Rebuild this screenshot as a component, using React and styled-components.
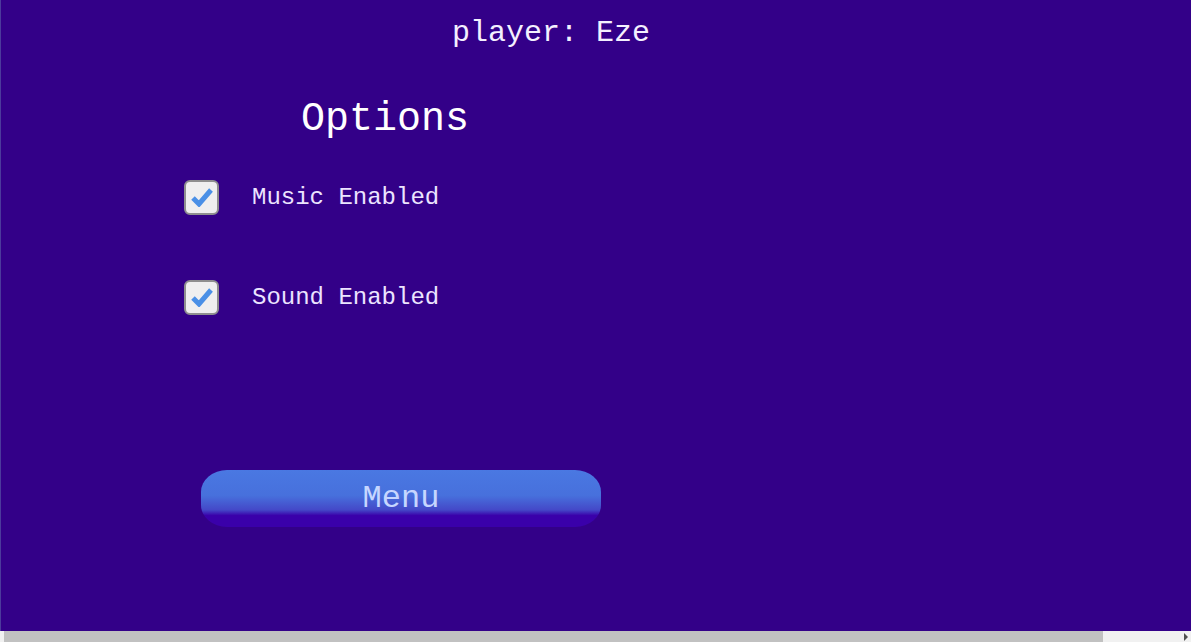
import React from 'react';
import styled, { createGlobalStyle } from 'styled-components';

// ==============================================

const BG = '#330088';

const Global = createGlobalStyle`
  html, body {
    margin: 0;
    padding: 0;
    overflow: hidden;
    background: ${BG};
  }
  body {
    font-family: "Liberation Mono", "Courier New", monospace;
  }
`;

// ==============================================

const Page = styled.div`
  display: flex;
  flex-direction: column;
  width: 1191px;
  height: 642px;
  background: ${BG};
  color: white;
`;
const Screen = styled.main`
  flex: 1;
  display: flex;
  flex-direction: column;
  border-left: 1px solid #4c3a9c;
`;
const Player = styled.div`
  width: 1100px;
  padding-top: 16px;
  text-align: center;
  font-size: 30px;
  line-height: 34px;
  color: #f4f0ff;
`;
const Title = styled.h1`
  width: 768px;
  margin: 47px 0 0 0;
  text-align: center;
  font-size: 40px;
  font-weight: normal;
  line-height: 46px;
`;
const Options = styled.div`
  display: flex;
  flex-direction: column;
  gap: 66px;
  margin: 37px 0 0 183px;
`;
const Row = styled.label`
  display: flex;
  align-items: center;
  gap: 33px;
  height: 34px;
  font-size: 24px;
  color: #ece4ff;
`;
const Box = styled.span`
  display: grid;
  place-items: center;
  box-sizing: border-box;
  width: 35px;
  height: 35px;
  background: #efefef;
  border: 2px solid #8f8f8f;
  border-radius: 6px;
`;
const MenuButton = styled.button`
  width: 400px;
  height: 57px;
  margin: 156px 0 0 200px;
  border: none;
  border-radius: 26px / 22px;
  background: linear-gradient(
    to bottom,
    #4a78e2 0%,
    #4770dc 45%,
    #4448c8 70%,
    #3a00aa 80%,
    #3a00aa 100%
  );
  color: #c6d6ff;
  font-family: "Liberation Mono", "Courier New", monospace;
  font-size: 32px;
  cursor: pointer;
`;
const Scrollbar = styled.div`
  display: flex;
  align-items: center;
  height: 11px;
  background: #f1f1f1;
`;
const Thumb = styled.div`
  width: 1099px;
  height: 100%;
  margin-left: 4px;
  background: #c1c1c1;
`;
const Arrow = styled.span`
  margin-left: auto;
  margin-right: 3px;
  width: 0;
  height: 0;
  border-top: 4px solid transparent;
  border-bottom: 4px solid transparent;
  border-left: 4px solid #505050;
`;

// ==============================================

function Check() {
  return (
    <svg width='22' height='20' viewBox='0 0 22 20'>
      <path
        d='M2 11 L8 17 L20 3'
        fill='none'
        stroke='#4a90e6'
        strokeWidth='5'
        strokeLinejoin='miter'
      />
    </svg>
  );
}

function Option({ label }) {
  return (
    <Row>
      <Box>
        <Check />
      </Box>
      {label}
    </Row>
  );
}

export default function App() {
  return (
    <Page>
      <Global />
      <Screen>
        <Player>player: Eze</Player>
        <Title>Options</Title>
        <Options>
          <Option label='Music Enabled' />
          <Option label='Sound Enabled' />
        </Options>
        <MenuButton>Menu</MenuButton>
      </Screen>
      <Scrollbar>
        <Thumb />
        <Arrow />
      </Scrollbar>
    </Page>
  );
}
